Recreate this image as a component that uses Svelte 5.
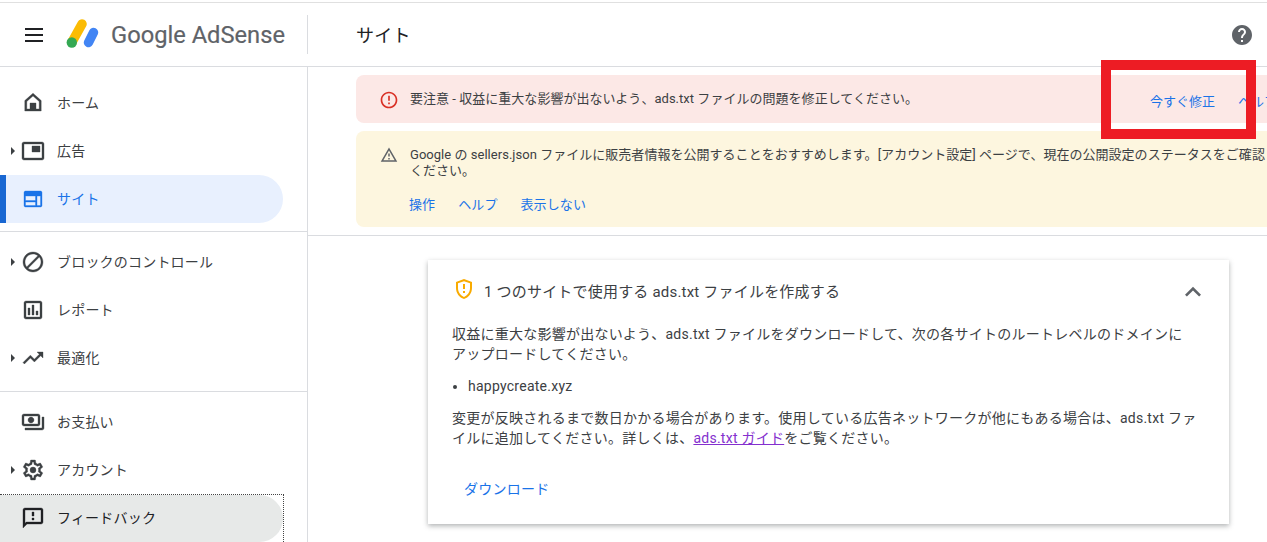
<script>
  const icons = {
    home: 'M12 2.2 3.8 9.6V20h16.4V9.6L12 2.2zm6.2 15.8H5.8v-7.5L12 4.9l6.2 5.6V18zM9 12h6v6H9z',
    ads: 'M21 3H3c-1.1 0-2 .9-2 2v14c0 1.1.9 2 2 2h18c1.1 0 2-.9 2-2V5c0-1.1-.9-2-2-2zm0 16.01H3V4.98h18v14.03zM19 7h-8v6h8z',
    sites: 'M19.5 4h-15C3.67 4 3 4.67 3 5.5v13c0 .83.67 1.5 1.5 1.5h15c.83 0 1.5-.67 1.5-1.5v-13c0-.83-.67-1.5-1.5-1.5zM14.5 18.5h-10V15h10v3.5zm0-5h-10V9h10v4.5zm5 5H16V9h3.5v9.5z',
    block: 'M12 2C6.48 2 2 6.48 2 12s4.48 10 10 10 10-4.48 10-10S17.52 2 12 2zM4 12c0-4.42 3.58-8 8-8 1.85 0 3.55.63 4.9 1.69L5.69 16.9C4.63 15.55 4 13.85 4 12zm8 8c-1.85 0-3.55-.63-4.9-1.69L18.31 7.1C19.37 8.45 20 10.15 20 12c0 4.42-3.58 8-8 8z',
    report: 'M19 3H5c-1.1 0-2 .9-2 2v14c0 1.1.9 2 2 2h14c1.1 0 2-.9 2-2V5c0-1.1-.9-2-2-2zm0 16H5V5h14v14zM7 10h2v7H7zM11 7h2v10h-2zM15 13h2v4h-2z',
    trend: 'M16 6l2.29 2.29-4.88 4.88-4-4L2 16.59 3.41 18l6-6 4 4 6.3-6.29L22 12V6z',
    pay: 'M19 14V6c0-1.1-.9-2-2-2H3c-1.1 0-2 .9-2 2v8c0 1.1.9 2 2 2h14c1.1 0 2-.9 2-2zm-2 0H3V6h14v8zm-7-7c-1.66 0-3 1.34-3 3s1.34 3 3 3 3-1.34 3-3-1.34-3-3-3zm13 0v11c0 1.1-.9 2-2 2H4v-2h17V7h2z',
    gear: 'M19.43 12.98c.04-.32.07-.64.07-.98 0-.34-.03-.66-.07-.98l2.11-1.65c.19-.15.24-.42.12-.64l-2-3.46c-.09-.16-.26-.25-.44-.25-.06 0-.12.01-.17.03l-2.49 1c-.52-.4-1.08-.73-1.69-.98l-.38-2.65C14.46 2.18 14.25 2 14 2h-4c-.25 0-.46.18-.49.42l-.38 2.65c-.61.25-1.17.59-1.69.98l-2.49-1c-.06-.02-.12-.03-.18-.03-.17 0-.34.09-.43.25l-2 3.46c-.13.22-.07.49.12.64l2.11 1.65c-.04.32-.07.65-.07.98 0 .33.03.66.07.98l-2.11 1.65c-.19.15-.24.42-.12.64l2 3.46c.09.16.26.25.44.25.06 0 .12-.01.17-.03l2.49-1c.52.4 1.08.73 1.69.98l.38 2.65c.03.24.24.42.49.42h4c.25 0 .46-.18.49-.42l.38-2.65c.61-.25 1.17-.59 1.69-.98l2.49 1c.06.02.12.03.18.03.17 0 .34-.09.43-.25l2-3.46c.12-.22.07-.49-.12-.64l-2.11-1.65zm-1.98-1.71c.04.31.05.52.05.73 0 .21-.02.43-.05.73l-.14 1.13.89.7 1.08.84-.7 1.21-1.27-.51-1.04-.42-.9.68c-.43.32-.84.56-1.25.73l-1.06.43-.16 1.13-.2 1.35h-1.4l-.19-1.35-.16-1.13-1.06-.43c-.43-.18-.83-.41-1.23-.71l-.91-.7-1.06.43-1.27.51-.7-1.21 1.08-.84.89-.7-.14-1.13c-.03-.31-.05-.54-.05-.74s.02-.43.05-.73l.14-1.13-.89-.7-1.08-.84.7-1.21 1.27.51 1.04.42.9-.68c.43-.32.84-.56 1.25-.73l1.06-.43.16-1.13.2-1.35h1.39l.19 1.35.16 1.13 1.06.43c.43.18.83.41 1.23.71l.91.7 1.06-.43 1.27-.51.7 1.21-1.07.85-.89.7.14 1.13zM12 9a3 3 0 1 0 0 6 3 3 0 0 0 0-6z',
    feedback: 'M20 2H4c-1.1 0-2 .9-2 2v18l4-4h14c1.1 0 2-.9 2-2V4c0-1.1-.9-2-2-2zm0 14H5.17L4 17.17V4h16v12zM11 12h2v2h-2zM11 6h2v4h-2z',
    error: 'M11 15h2v2h-2zm0-8h2v6h-2zm.99-5C6.47 2 2 6.48 2 12s4.47 10 9.99 10C17.52 22 22 17.52 22 12S17.52 2 11.99 2zM12 20c-4.42 0-8-3.58-8-8s3.58-8 8-8 8 3.58 8 8-3.58 8-8 8z',
    warning: 'M1 21h22L12 2 1 21zm3.47-2L12 5.99 19.53 19H4.47zM11 16h2v2h-2zM11 10h2v4h-2z',
    help: 'M12 2C6.48 2 2 6.48 2 12s4.48 10 10 10 10-4.48 10-10S17.52 2 12 2zm1 17h-2v-2h2v2zm2.07-7.75l-.9.92C13.45 12.9 13 13.5 13 15h-2v-.5c0-1.1.45-2.1 1.17-2.83l1.24-1.26c.37-.36.59-.86.59-1.41 0-1.1-.9-2-2-2s-2 .9-2 2H8c0-2.21 1.79-4 4-4s4 1.79 4 4c0 .88-.36 1.68-.93 2.25z',
    shield: 'M12 2L4 5v6.09c0 5.05 3.41 9.76 8 10.91 4.59-1.15 8-5.86 8-10.91V5l-8-3zm6 9.09c0 4-2.55 7.7-6 8.83-3.45-1.13-6-4.82-6-8.83V6.31l6-2.12 6 2.12v4.78zM11 14h2v2h-2zM11 7h2v5h-2z',
    less: 'M12 8l-6 6 1.41 1.41L12 10.83l4.59 4.58L18 14z'
  }

  const navGroups = [
    [
      { label: 'ホーム', icon: 'home' },
      { label: '広告', icon: 'ads', arrow: true },
      { label: 'サイト', icon: 'sites', active: true }
    ],
    [
      { label: 'ブロックのコントロール', icon: 'block', arrow: true },
      { label: 'レポート', icon: 'report' },
      { label: '最適化', icon: 'trend', arrow: true }
    ],
    [
      { label: 'お支払い', icon: 'pay' },
      { label: 'アカウント', icon: 'gear', arrow: true },
      { label: 'フィードバック', icon: 'feedback', focused: true }
    ]
  ]
</script>

{#snippet icon(name, size = 24)}
  <svg class="icon" width={size} height={size} viewBox="0 0 24 24" fill="currentColor" fill-rule="evenodd" aria-hidden="true">
    <path d={icons[name]} />
  </svg>
{/snippet}

<div class="page">
  <header class="topbar">
    <div class="brand">
      <button class="burger" aria-label="メニュー"><span></span><span></span><span></span></button>
      <svg class="logo" width="36" height="30" viewBox="0 0 36 30" aria-hidden="true">
        <line x1="7" y1="23" x2="17" y2="5" stroke="#fbbc04" stroke-width="9.5" stroke-linecap="round" />
        <line x1="23.5" y1="23.5" x2="28.5" y2="13.5" stroke="#4285f4" stroke-width="9.5" stroke-linecap="round" />
        <circle cx="6.8" cy="23.5" r="5.2" fill="#34a853" />
      </svg>
      <span class="wordmark">Google AdSense</span>
      <span class="brand-rule"></span>
    </div>
    <h1>サイト</h1>
    <span class="help">{@render icon('help')}</span>
  </header>

  <div class="body">
    <nav class="sidebar">
      {#each navGroups as group}
        <ul>
          {#each group as item}
            <li class:active={item.active} class:focused={item.focused}>
              {#if item.arrow}<i class="arrow"></i>{/if}
              {@render icon(item.icon)}
              <span>{item.label}</span>
            </li>
          {/each}
        </ul>
      {/each}
    </nav>

    <main>
      <section class="alerts">
        <div class="alert red">
          <span class="alert-icon err">{@render icon('error', 20)}</span>
          <p>要注意 - 収益に重大な影響が出ないよう、ads.txt ファイルの問題を修正してください。</p>
          <div class="links"><a href="#fix">今すぐ修正</a><a href="#help">ヘルプ</a><a href="#hide">表示しない</a></div>
        </div>
        <div class="alert yellow">
          <span class="alert-icon warn">{@render icon('warning', 18)}</span>
          <div>
            <p>Google の sellers.json ファイルに販売者情報を公開することをおすすめします。[アカウント設定] ページで、現在の公開設定のステータスをご確認ください。</p>
            <div class="links"><a href="#act">操作</a><a href="#help">ヘルプ</a><a href="#hide">表示しない</a></div>
          </div>
        </div>
      </section>

      <article class="card">
        <div class="card-head">
          <span class="shield">{@render icon('shield')}</span>
          <h2>1 つのサイトで使用する ads.txt ファイルを作成する</h2>
          <span class="chevron">{@render icon('less', 32)}</span>
        </div>
        <p class="intro">収益に重大な影響が出ないよう、ads.txt ファイルをダウンロードして、次の各サイトのルートレベルのドメインにアップロードしてください。</p>
        <ul class="domains"><li>happycreate.xyz</li></ul>
        <p>変更が反映されるまで数日かかる場合があります。使用している広告ネットワークが他にもある場合は、ads.txt ファイルに追加してください。詳しくは、<a class="visited" href="#guide">ads.txt ガイド</a>をご覧ください。</p>
        <a class="download" href="#download">ダウンロード</a>
      </article>
    </main>
  </div>

  <div class="callout"></div>
</div>

<style>
  :global(body) {
    margin: 0;
    overflow: hidden;
    background: #fff;
  }

  .page {
    position: relative;
    height: 542px;
    overflow: hidden;
    padding-top: 2px;
    box-sizing: border-box;
    font-family: Roboto, "Noto Sans CJK JP", sans-serif;
    color: #3c4043;
  }

  .icon {
    display: block;
    flex: none;
  }

  /* top bar */
  .topbar {
    display: flex;
    align-items: center;
    height: 63px;
    border-top: 1px solid #e0e0e0;
    border-bottom: 1px solid #dadce0;
  }

  .brand {
    display: flex;
    align-items: center;
    position: relative;
    flex: none;
    width: 308px;
    height: 100%;
    box-sizing: border-box;
    padding-left: 25px;
  }

  .brand-rule {
    position: absolute;
    right: 0;
    top: 12px;
    bottom: 12px;
    width: 1px;
    background: #dadce0;
  }

  .burger {
    display: flex;
    flex-direction: column;
    gap: 4px;
    width: 18px;
    padding: 0;
    border: 0;
    background: none;
  }

  .burger span {
    height: 2px;
    background: #202124;
  }

  .logo {
    margin-left: 22px;
    margin-top: -2px;
  }

  .wordmark {
    margin-left: 10px;
    font-size: 23.7px;
    color: #5f6368;
    -webkit-text-stroke: 0.2px #5f6368;
  }

  h1 {
    margin: 0 0 2px 48px;
    flex: 1;
    font-size: 18px;
    font-weight: 400;
    letter-spacing: 0.25px;
    color: #202124;
  }

  .help {
    margin-right: 13px;
    color: #5f6368;
  }

  /* sidebar */
  .body {
    display: flex;
    height: 475px;
  }

  .sidebar {
    flex: none;
    width: 308px;
    box-sizing: border-box;
    border-right: 1px solid #dadce0;
  }

  .sidebar ul {
    list-style: none;
    margin: 0;
    padding: 6px 0 9px;
    border-bottom: 1px solid #dadce0;
  }

  .sidebar ul:first-child {
    padding: 12px 0 8px;
  }

  .sidebar ul:last-child {
    border-bottom: 0;
  }

  .sidebar li {
    position: relative;
    isolation: isolate;
    display: flex;
    align-items: center;
    gap: 12px;
    width: 283px;
    height: 48px;
    box-sizing: border-box;
    padding-left: 21px;
    font-size: 14px;
    letter-spacing: 0.2px;
    color: #3c4043;
    border-radius: 0 24px 24px 0;
  }

  .sidebar li .icon {
    stroke: currentColor;
    stroke-width: 0.35px;
  }

  .sidebar li span {
    margin-bottom: 2px;
  }

  .arrow {
    position: absolute;
    left: 11px;
    top: 50%;
    margin-top: -4px;
    border-left: 4px solid #3c4043;
    border-top: 4px solid transparent;
    border-bottom: 4px solid transparent;
  }

  .sidebar li.active {
    background: #e8f0fe;
    color: #1a73e8;
    box-shadow: inset 6px 0 0 #1967d2;
  }

  .sidebar li.focused {
    width: 284px;
    color: #202124;
    border-radius: 0;
  }

  .sidebar li.focused::before {
    content: "";
    position: absolute;
    z-index: -1;
    inset: 1px 1px 0 0;
    background: #e7e9e8;
    border-radius: 0 24px 24px 0;
  }

  .sidebar li.focused::after {
    content: "";
    position: absolute;
    inset: 0;
    border-top: 1px dotted #444;
    border-right: 1px dotted #444;
  }

  /* alerts */
  main {
    flex: 1;
    min-width: 0;
    overflow: hidden;
  }

  .alerts {
    display: flex;
    flex-direction: column;
    gap: 8px;
    padding: 8px 0 8px 48px;
    border-bottom: 1px solid #dadce0;
  }

  .alert {
    display: flex;
    width: 1033px;
    box-sizing: border-box;
    padding-left: 23px;
    padding-right: 24px;
    border-radius: 8px;
    font-size: 13px;
    line-height: 16px;
    color: #3c4043;
  }

  .alert p {
    margin: 0;
    letter-spacing: 0.03px;
  }

  .alert-icon {
    margin-right: 11px;
  }

  .err {
    color: #d93025;
  }

  .warn {
    color: #5f6368;
    margin: -1px 12px 0 1px;
  }

  .red {
    height: 48px;
    box-sizing: border-box;
    padding-top: 2px;
    align-items: center;
    background: #fce8e6;
  }

  .red p {
    flex: 1;
    margin-bottom: 2px;
  }

  .yellow {
    height: 96px;
    padding-top: 16px;
    background: #fdf6df;
  }

  .yellow p {
    width: 860px;
  }

  .links {
    display: flex;
    gap: 23px;
    font-size: 13px;
  }

  .links a,
  .download {
    color: #1a73e8;
    text-decoration: none;
  }

  .yellow .links {
    margin-top: 18px;
    margin-left: -1px;
    letter-spacing: 0.1px;
  }

  .red .links {
    margin-top: 3px;
  }

  /* card */
  .card {
    width: 801px;
    height: 264px;
    box-sizing: border-box;
    margin: 24px 0 0 120px;
    padding: 0 24px;
    background: #fff;
    box-shadow: 0 2px 5px rgba(60, 64, 67, 0.4);
    font-size: 14px;
    line-height: 20px;
    letter-spacing: 0.25px;
    color: #3c4043;
  }

  .card-head {
    display: flex;
    align-items: center;
    height: 64px;
  }

  .shield {
    color: #f9ab00;
    margin: -6px 8px 0 0;
  }

  h2 {
    flex: 1;
    margin: 0;
    font-size: 15px;
    font-weight: 400;
    letter-spacing: 0.2px;
    color: #3c4043;
  }

  .chevron {
    color: #5f6368;
    margin-right: -4px;
  }

  .card p {
    margin: 0;
  }

  .card .intro {
    max-width: 735px;
  }

  .domains {
    margin: 12px 0 12px;
    padding: 0 0 0 16px;
  }

  .visited {
    color: #8430ce;
    text-decoration: underline;
  }

  .download {
    display: block;
    margin: 31px 0 0 12px;
  }

  /* red annotation box */
  .callout {
    position: absolute;
    left: 1101px;
    top: 60px;
    width: 155px;
    height: 79px;
    box-sizing: border-box;
    border: 10px solid #ed1c24;
    pointer-events: none;
  }
</style>
